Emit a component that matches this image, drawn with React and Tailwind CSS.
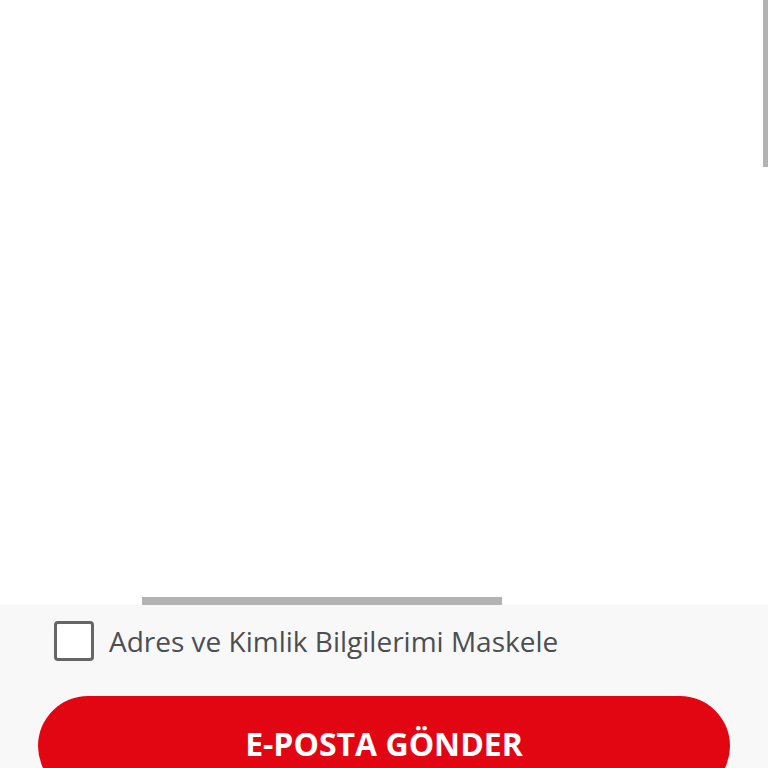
export default function App() {
  return (
    <div className="relative flex h-[768px] w-[768px] flex-col overflow-hidden bg-white font-['Open_Sans',sans-serif]">
      {/* vertical scroll indicator */}
      <div className="absolute right-0 top-0 h-[167px] w-[5px] bg-[#b3b3b3]" />

      <div className="flex flex-1 flex-col justify-end bg-white">
        <div className="ml-[142px] h-[8px] w-[360px] bg-[#b3b3b3]" />
      </div>

      <div className="flex h-[163px] shrink-0 flex-col bg-[#f8f8f8]">
        <label className="mt-[16px] flex shrink-0 items-center gap-[15px] pl-[54px]">
          <span className="h-[40px] w-[40px] shrink-0 rounded-[4px] border-[3px] border-[#666666] bg-white" />
          <span className="text-[28px] leading-[40px] text-[#4b4f54]">Adres ve Kimlik Bilgilerimi Maskele</span>
        </label>
        <button
          type="button"
          className="mx-[38px] mt-[35px] flex h-[100px] shrink-0 items-start justify-center rounded-full bg-[#e20613] pt-[28px] text-[32px] font-bold leading-[40px] text-white"
        >
          E-POSTA GÖNDER
        </button>
      </div>
    </div>
  );
}
